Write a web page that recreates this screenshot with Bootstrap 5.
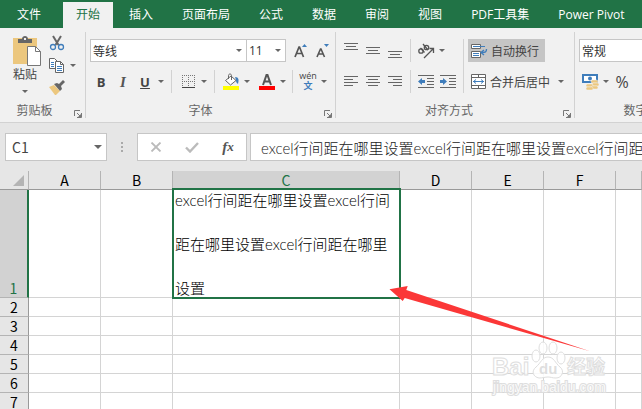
<!DOCTYPE html>
<html lang="zh-CN">
<head>
<meta charset="utf-8">
<meta name="viewport" content="width=device-width, initial-scale=1">
<title>Excel</title>
<link href="https://cdn.jsdelivr.net/npm/bootstrap@5.3.0/dist/css/bootstrap.min.css" rel="stylesheet">
<style>
  body { font-family: "Noto Sans CJK SC", sans-serif; font-size: 12px; line-height: 16px; color: #444; background: #e6e6e6; overflow: hidden; }
  svg { display: block; }
  .ribbon-tabs { background: #217346; height: 28px; padding-top: 2px; gap: 3px; overflow: hidden; }
  .ribbon-tabs .nav-link { color: #fff; padding: 4px 13px; line-height: 18px; white-space: nowrap; border-radius: 0; height: 26px; font-family: "Open Sans", "Noto Sans CJK SC", sans-serif; }
  .ribbon-tabs .nav-link.active { background: #f1f1f1; color: #217346; }
  .ribbon-tabs .file-tab { padding-inline: 17px; margin-right: 2px; }
  .ribbon { background: #f1f1f1; border-bottom: 1px solid #d2d2d2; padding: 4px 0; overflow: hidden; }
  .tool-group { flex: none; height: 86px; padding-top: 7px; border-right: 1px solid #d2d2d2; }
  .group-clip { width: 86px; padding-top: 0; }
  .group-clip .tool-body { height: 61px; }
  .group-clip .tb { height: 22px; }
  .paste-btn { color: inherit; border: 0; background: none; padding: 4px 0 0; }
  .group-font { width: 250px; padding-left: 4px; }
  .group-align { width: 239px; padding-left: 4px; }
  .group-num { width: 118px; padding-left: 4px; }
  .tool-body { height: 54px; }
  .tool-row { height: 23px; }
  .group-label { margin-top: 9px; color: #666; text-align: center; }
  .launcher { right: 3px; bottom: 0; }
  .tb { border: 0; background: none; padding: 0; color: #444; width: 22px; height: 23px; flex: none; display: flex; align-items: center; justify-content: center; }
  .tb-drop { width: 10px; }
  .glyph { font-family: "Open Sans", sans-serif; font-size: 13px; }
  .glyph-serif { font-family: "Liberation Serif", serif; font-size: 15px; font-style: italic; font-weight: 700; color: #555; }
  .glyph-big { font-size: 16px; }
  .vbar { width: 1px; background: #d2d2d2; margin: 0 5px; align-self: stretch; flex: none; }
  .vbar-near { margin: 0 4px; }
  .pick { appearance: none; border: 1px solid #c6c6c6; border-radius: 0; color: #333; height: 23px; padding: 0 2px; background: #fff url("data:image/svg+xml,%3Csvg xmlns='http://www.w3.org/2000/svg' width='6' height='3'%3E%3Cpath d='M0 0h6L3 3z' fill='%23666'/%3E%3C/svg%3E") no-repeat right 4px center; }
  .pick-font { width: 157px; }
  .pick-size { width: 40px; margin-left: -1px; font-family: "Open Sans", sans-serif; }
  .pick-num { width: 112px; }
  .tb-text { width: auto; gap: 3px; padding: 0 6px 0 3px; white-space: nowrap; }
  .tb-text.on { background: #c5c5c5; }
  .formula-bar { height: 48px; padding: 10px 0 10px 5px; overflow: hidden; }
  .boxed { background: #fff; border: 1px solid #c6c6c6; height: 28px; }
  .name-box { width: 102px; color: #444; }
  .name-box input { border: 0; background: none; width: 70px; padding: 0 6px; font-size: 14px; color: #444; }
  .fx-tools { width: 110px; margin-right: 3px; }
  .dots { width: 30px; }
  .formula-input { flex: 1; min-width: 0; border-radius: 0; border-right: 0; padding: 0 0 0 10px; }
  .formula-input, .cell-text { font-family: Lato, "Noto Sans CJK SC", sans-serif; font-size: 15px; font-weight: 300; }
  .formula-input { color: #222; outline: 0; }
  .grid-sheet { table-layout: fixed; width: 100%; border-collapse: separate; border-spacing: 0; background: #fff; font-size: 14px; line-height: 18px; color: #000; }
  .grid-sheet th, .grid-sheet td { padding: 0; height: 19px; border-right: 1px solid #d4d4d4; border-bottom: 1px solid #d4d4d4; text-align: center; font-weight: 400; }
  .grid-sheet th { background: #e6e6e6; border-color: #b4b4b4; }
  .grid-sheet thead th { border-bottom-color: #999; }
  .grid-sheet tbody th { border-right-color: #999; vertical-align: bottom; }
  .grid-sheet th.picked { background: #d2d2d2; color: #217346; }
  .grid-sheet tbody th.picked { border-right: 2px solid #217346; }
  .col-heads { width: 29px; }
  .col-std { width: 72px; }
  .col-wide { width: 227px; }
  .grid-sheet .row-tall td, .grid-sheet .row-tall th { height: 107px; }
  .grid-sheet td.current { position: relative; vertical-align: top; text-align: left; }
  .current::after { content: ""; position: absolute; inset: -2px -2px -2px -1px; border: 2px solid #217346; }
  .cell-text { line-height: 44px; margin: -12px 0 -13px; padding-left: 2px; height: 132px; }
  .sheet-wrap { height: 238px; }
  .overlay-art { position: absolute; pointer-events: none; }
  .art-arrow { left: 389px; top: 114px; }
  .art-mark { left: 488px; top: 166px; }
</style>
<script src="https://cdn.jsdelivr.net/npm/bootstrap@5.3.0/dist/js/bootstrap.bundle.min.js"></script>
</head>
<body>
<svg width="0" height="0" class="position-absolute" aria-hidden="true">
  <symbol id="caret" viewBox="0 0 6 3"><path d="M0 0h6L3 3z" fill="#666"/></symbol>
  <symbol id="launch" viewBox="0 0 8 8"><path d="M.5 6V.5H6M3 3l3 3M7.500 3v4.500H3" fill="none" stroke="#777"/><path d="M7 4v3H4z" fill="#777"/></symbol>
</svg>

<nav class="nav ribbon-tabs flex-nowrap" aria-label="功能区">
  <a class="nav-link file-tab" href="#">文件</a>
  <a class="nav-link active" href="#" aria-current="page">开始</a>
  <a class="nav-link" href="#">插入</a>
  <a class="nav-link" href="#">页面布局</a>
  <a class="nav-link" href="#">公式</a>
  <a class="nav-link" href="#">数据</a>
  <a class="nav-link" href="#">审阅</a>
  <a class="nav-link" href="#">视图</a>
  <a class="nav-link" href="#">PDF工具集</a>
  <a class="nav-link" href="#">Power Pivot</a>
</nav>

<div class="ribbon d-flex">
  <section class="tool-group group-clip position-relative">
    <div class="tool-body d-flex align-items-start">
      <button class="paste-btn ms-2 d-flex flex-column align-items-center">
        <svg width="34" height="30" viewBox="-2 0 34 30"><path d="M3 2h24v26H3z" fill="#ecc77e"/><path d="M8 7V3h4c0-4 6-4 6 0h4v4z" fill="#666"/><path d="M14 2h2v2h-2z" fill="#f1f1f1"/><path d="M17.500 10.500h8l5 5v14h-13z" fill="#fff" stroke="#777"/><path d="M25.500 10.500v5h5" fill="none" stroke="#777"/></svg>
        <span>粘贴</span>
        <svg class="mt-2" width="6" height="3"><use href="#caret"/></svg>
      </button>
      <div class="d-flex flex-column ms-1">
        <button class="tb" aria-label="剪切"><svg width="16" height="16" viewBox="0 0 16 16"><path d="M4 1l5.500 9M12 1L6.500 10" stroke="#666" stroke-width="2" fill="none"/><circle cx="4" cy="12" r="2.500" fill="none" stroke="#3f7dbb" stroke-width="1.300"/><circle cx="12" cy="12" r="2.500" fill="none" stroke="#3f7dbb" stroke-width="1.300"/></svg></button>
        <div class="d-flex">
          <button class="tb" aria-label="复制"><svg width="16" height="15" viewBox="0 0 16 15"><path d="M.5.500h5l3 3v7h-8z" fill="#fff" stroke="#666"/><path d="M6.500 3.500h5l3 3v8h-8z" fill="#fff" stroke="#666"/><path d="M11.500 3.500v3h3" fill="none" stroke="#666"/><path d="M2 4.500h3M2 6.500h3M2 8.500h3M8 8.500h5M8 10.500h5M8 12.500h5" stroke="#3f7dbb"/></svg></button>
          <button class="tb tb-drop" aria-label="复制选项"><svg width="6" height="3"><use href="#caret"/></svg></button>
        </div>
        <button class="tb" aria-label="格式刷"><svg width="16" height="15" viewBox="0 0 16 15"><path d="M0 7l5-2 6 6-4 4h-1z" fill="#ecc77e"/><path d="M5 4l3-1 2 1 4-4 2 2-4 4 1 3-2 2z" fill="#666"/></svg></button>
      </div>
    </div>
    <div class="group-label pe-3">剪贴板</div>
    <button class="launcher position-absolute border-0 bg-transparent p-0" aria-label="剪贴板设置"><svg width="8" height="8"><use href="#launch"/></svg></button>
  </section>

  <section class="tool-group group-font position-relative">
    <div class="tool-body d-flex flex-column gap-2">
      <div class="tool-row d-flex">
        <select class="pick pick-font" aria-label="字体"><option>等线</option></select>
        <select class="pick pick-size" aria-label="字号"><option>11</option></select>
        <button class="tb ms-1" aria-label="增大字号"><svg width="14" height="16" viewBox="0 0 14 16"><path d="M1 14L5 4h.500l4 10M2.500 10.500h6" stroke="#555" stroke-width="1.700" fill="none"/><path d="M8 4l2.500-3L13 4z" fill="#3f7dbb"/></svg></button>
        <button class="tb" aria-label="减小字号"><svg width="14" height="16" viewBox="0 0 14 16"><path d="M1 14l3.500-8h.500l3.500 8M2.500 11h5" stroke="#555" stroke-width="1.600" fill="none"/><path d="M8 1h5l-2.500 3z" fill="#3f7dbb"/></svg></button>
      </div>
      <div class="tool-row d-flex">
        <button class="tb glyph fw-bold">B</button>
        <button class="tb glyph-serif">I</button>
        <button class="tb glyph fw-bold text-decoration-underline">U</button>
        <button class="tb tb-drop" aria-label="下划线选项"><svg width="6" height="3"><use href="#caret"/></svg></button>
        <span class="vbar"></span>
        <button class="tb" aria-label="边框"><svg width="13" height="13" viewBox="0 0 13 13"><path d="M0 .500h13M0 6.500h13M.5 0v12M6.500 0v12M12.500 0v12" stroke="#777" stroke-dasharray="1 1"/><path d="M0 12.500h13" stroke="#444"/></svg></button>
        <button class="tb tb-drop" aria-label="边框选项"><svg width="6" height="3"><use href="#caret"/></svg></button>
        <span class="vbar"></span>
        <button class="tb" aria-label="填充颜色"><svg width="16" height="17" viewBox="0 0 16 17"><path d="M2.500 7.500L8 3l5 4.500L7.500 12z" fill="#fff" stroke="#666"/><path d="M5.500 6V2.500c0-2 3-2 3 0V7" fill="none" stroke="#666"/><path d="M12 4c4 0 4 3 3 7-2-1-2-3-2-4z" fill="#3f7dbb"/><path d="M0 13h16v4H0z" fill="#ff0"/></svg></button>
        <button class="tb tb-drop" aria-label="填充颜色选项"><svg width="6" height="3"><use href="#caret"/></svg></button>
        <button class="tb ms-1" aria-label="字体颜色"><svg width="16" height="17" viewBox="0 0 16 17"><path d="M4 12L7.500 2h1L12 12M5.500 8.500h5" stroke="#555" stroke-width="2" fill="none"/><path d="M0 13h16v4H0z" fill="#f00"/></svg></button>
        <button class="tb tb-drop" aria-label="字体颜色选项"><svg width="6" height="3"><use href="#caret"/></svg></button>
        <span class="vbar vbar-near"></span>
        <button class="tb" aria-label="拼音"><svg width="22" height="23" viewBox="0 0 22 23"><text x="11" y="9" text-anchor="middle" font-family="Open Sans" font-size="9" fill="#444">wén</text><text x="11" y="19" text-anchor="middle" font-family="Noto Sans CJK SC" font-weight="700" font-size="9" fill="#3f7dbb">文</text></svg></button>
        <button class="tb tb-drop" aria-label="拼音选项"><svg width="6" height="3"><use href="#caret"/></svg></button>
      </div>
    </div>
    <div class="group-label pe-4">字体</div>
    <button class="launcher position-absolute border-0 bg-transparent p-0" aria-label="字体设置"><svg width="8" height="8"><use href="#launch"/></svg></button>
  </section>

  <section class="tool-group group-align position-relative">
    <div class="tool-body d-flex">
      <div class="d-flex flex-column gap-2">
        <div class="tool-row d-flex">
          <button class="tb align-items-start pt-1" aria-label="顶端对齐"><svg width="14" height="7"><path d="M0 .500h14M2 3.500h10M0 6.500h14" stroke="#666"/></svg></button>
          <button class="tb" aria-label="垂直居中"><svg width="14" height="7"><path d="M0 .500h14M2 3.500h10M0 6.500h14" stroke="#666"/></svg></button>
          <button class="tb align-items-end pb-1" aria-label="底端对齐"><svg width="14" height="7"><path d="M0 .500h14M2 3.500h10M0 6.500h14" stroke="#666"/></svg></button>
          <span class="vbar vbar-near"></span>
          <button class="tb" aria-label="方向"><svg width="18" height="18" viewBox="0 0 18 18"><g fill="none" stroke="#555" stroke-width="1.300"><circle cx="4" cy="9" r="2.200"/><path d="M3.500 6l4 4.500M6 2l5 6"/><circle cx="9.500" cy="5.500" r="2.200"/><path d="M7 16L16 7M12.500 6.500H16.500V11"/></g></svg></button>
          <button class="tb tb-drop" aria-label="方向选项"><svg width="6" height="3"><use href="#caret"/></svg></button>
        </div>
        <div class="tool-row d-flex">
          <button class="tb" aria-label="左对齐"><svg width="14" height="11"><path d="M0 .500h14M0 3.500h9M0 6.500h14M0 9.500h9" stroke="#666"/></svg></button>
          <button class="tb" aria-label="居中"><svg width="14" height="11"><path d="M0 .500h14M2 3.500h10M0 6.500h14M2 9.500h10" stroke="#666"/></svg></button>
          <button class="tb" aria-label="右对齐"><svg width="14" height="11"><path d="M0 .500h14M5 3.500h9M0 6.500h14M5 9.500h9" stroke="#666"/></svg></button>
          <span class="vbar vbar-near"></span>
          <button class="tb" aria-label="减少缩进"><svg width="16" height="13"><path d="M0 .500h16M9 3.500h7M9 6.500h7M9 9.500h7M0 12.500h16" stroke="#666"/><path d="M0 6.500L4 3v2h3v3H4v2z" fill="#3f7dbb"/></svg></button>
          <button class="tb" aria-label="增加缩进"><svg width="16" height="13"><path d="M0 .500h16M9 3.500h7M9 6.500h7M9 9.500h7M0 12.500h16" stroke="#666"/><path d="M7 6.500L3 3v2H0v3h3v2z" fill="#3f7dbb"/></svg></button>
        </div>
      </div>
      <span class="vbar vbar-near"></span>
      <div class="d-flex flex-column gap-2">
        <div class="tool-row d-flex">
          <button class="tb tb-text on"><svg width="17" height="16" viewBox="0 0 17 16"><path d="M.5 1.500h9v4h-9zM.5 8.500h9v6h-9z" fill="#fff" stroke="#666"/><path d="M2 3.500h12M2 10.500h6M2 12.500h6" stroke="#3f7dbb"/><path d="M15.500 6c0 3-1 3.500-5 3.500M13 7l-3 2.500 3 2.500" fill="none" stroke="#3f7dbb" stroke-width="1.400"/></svg>自动换行</button>
        </div>
        <div class="tool-row d-flex">
          <button class="tb tb-text"><svg width="16" height="15" viewBox="0 0 16 15"><path d="M.5.500h14v14H.5zM.5 3.500h14v8H.5M7.500 0v4M7.500 11v4" fill="#fff" stroke="#666"/><path d="M2 7.500h11M5 5.500l-2.500 2L5 9.500M10 5.500l2.500 2-2.500 2" fill="none" stroke="#3f7dbb"/></svg>合并后居中</button>
          <button class="tb tb-drop" aria-label="合并选项"><svg width="6" height="3"><use href="#caret"/></svg></button>
        </div>
      </div>
    </div>
    <div class="group-label pe-3">对齐方式</div>
    <button class="launcher position-absolute border-0 bg-transparent p-0" aria-label="对齐设置"><svg width="8" height="8"><use href="#launch"/></svg></button>
  </section>

  <section class="tool-group group-num">
    <div class="tool-body d-flex flex-column gap-2">
      <div class="tool-row d-flex">
        <select class="pick pick-num" aria-label="数字格式"><option>常规</option></select>
      </div>
      <div class="tool-row d-flex">
        <button class="tb" aria-label="会计数字格式"><svg width="17" height="16" viewBox="0 0 17 16"><path d="M1 1h14v7H1z" fill="#fff" stroke="#3f7dbb" stroke-width="2"/><circle cx="8" cy="4.500" r="2" fill="#3f7dbb"/><g fill="#ecc77e" stroke="#f1f1f1" stroke-width=".5"><rect x="9" y="6" width="7" height="3" rx="1.500"/><rect x="10" y="9" width="7" height="3" rx="1.500"/><rect x="4" y="10" width="7" height="3" rx="1.500"/><rect x="9" y="12" width="7" height="3" rx="1.500"/><rect x="4" y="13" width="7" height="3" rx="1.500"/></g></svg></button>
        <button class="tb tb-drop" aria-label="会计格式选项"><svg width="6" height="3"><use href="#caret"/></svg></button>
        <button class="tb glyph glyph-big">%</button>
      </div>
    </div>
    <div class="group-label">数字</div>
  </section>
</div>

<div class="formula-bar d-flex">
  <div class="boxed name-box d-flex align-items-center justify-content-between flex-shrink-0 pe-1">
    <input value="C1" aria-label="名称框">
    <svg width="8" height="4" viewBox="0 0 8 4"><path d="M0 0h8L4 4z" fill="#666"/></svg>
  </div>
  <div class="dots d-flex align-items-center justify-content-center flex-shrink-0"><svg width="2" height="10"><path d="M0 0h2v2H0zM0 4h2v2H0zM0 8h2v2H0z" fill="#aaa"/></svg></div>
  <div class="boxed fx-tools d-flex align-items-center justify-content-around flex-shrink-0">
    <button class="tb" aria-label="取消"><svg width="12" height="10" viewBox="0 0 12 10"><path d="M1.500.500l9 9M10.500.500l-9 9" stroke="#bbb" stroke-width="1.800"/></svg></button>
    <button class="tb" aria-label="输入"><svg width="14" height="11" viewBox="0 0 14 11"><path d="M1 5.500l4 4L13 1" fill="none" stroke="#bbb" stroke-width="2.400"/></svg></button>
    <button class="tb glyph-serif" aria-label="插入函数">f<small>x</small></button>
  </div>
  <input class="boxed formula-input" aria-label="编辑栏" value="excel行间距在哪里设置excel行间距在哪里设置excel行间距在哪里设置">
</div>

<main class="sheet-wrap position-relative overflow-hidden">
  <table class="grid-sheet">
    <colgroup><col class="col-heads"><col class="col-std"><col class="col-std"><col class="col-wide"><col class="col-std"><col class="col-std"><col class="col-std"><col></colgroup>
    <thead>
      <tr><th aria-label="全选"><svg class="ms-auto me-1" width="11" height="11"><path d="M11 0v11H0z" fill="#b4b4b4"/></svg></th><th>A</th><th>B</th><th class="picked">C</th><th>D</th><th>E</th><th>F</th><th></th></tr>
    </thead>
    <tbody>
      <tr class="row-tall"><th class="picked">1</th><td></td><td></td><td class="current"><div class="cell-text">excel行间距在哪里设置excel行间距在哪里设置excel行间距在哪里设置</div></td><td></td><td></td><td></td><td></td></tr>
      <tr><th>2</th><td></td><td></td><td></td><td></td><td></td><td></td><td></td></tr>
      <tr><th>3</th><td></td><td></td><td></td><td></td><td></td><td></td><td></td></tr>
      <tr><th>4</th><td></td><td></td><td></td><td></td><td></td><td></td><td></td></tr>
      <tr><th>5</th><td></td><td></td><td></td><td></td><td></td><td></td><td></td></tr>
      <tr><th>6</th><td></td><td></td><td></td><td></td><td></td><td></td><td></td></tr>
      <tr><th>7</th><td></td><td></td><td></td><td></td><td></td><td></td><td></td></tr>
    </tbody>
  </table>
  <svg class="overlay-art art-mark" width="125" height="62" viewBox="0 0 125 62">
    <g fill="#fff" fill-opacity=".85" stroke="#dedede" stroke-width="1">
      <g font-weight="700"><text x="4" y="38" font-family="Liberation Sans" font-size="24">Bai</text>
      <text x="79" y="37" font-family="Noto Sans CJK SC" font-size="19">经验</text></g>
      <text x="5" y="55" font-family="Liberation Sans" font-size="14" paint-order="stroke" stroke-width="2">jingyan.baidu.com</text>
      <ellipse cx="48" cy="19" rx="4" ry="6"/><ellipse cx="55" cy="11" rx="4" ry="6"/><ellipse cx="65" cy="11" rx="4" ry="6"/><ellipse cx="73" cy="21" rx="4" ry="6"/>
      <path d="M60 20c6 0 7 6 12 10 5 4 2 11-4 11-4 0-5-1-8-1s-5 1-9 1c-6-1-8-7-3-11 5-4 6-10 12-10z"/>
      <text x="51" y="37" font-family="Liberation Sans" font-weight="700" font-size="15" fill="#d8d8d8" stroke="none">du</text>
    </g>
  </svg>
  <svg class="overlay-art art-arrow" width="202" height="68" viewBox="389 285 202 68"><path d="M389.500 289.300L407.700 286l-1.400 4L590 351.300 404.700 298l-2 3z" fill="#fb3737"/></svg>
</main>
</body>
</html>
